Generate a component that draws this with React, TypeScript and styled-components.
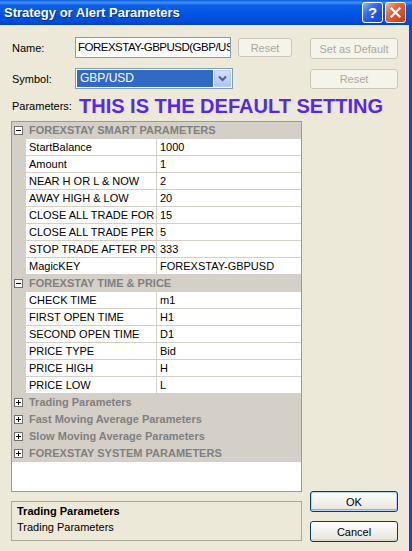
import styled, { createGlobalStyle } from 'styled-components'

const GlobalStyle = createGlobalStyle`
  html, body {
    margin: 0;
    padding: 0;
    background: #ece9d8;
  }
  body {
    font-family: "Liberation Sans", Arial, sans-serif;
    font-size: 11px;
    color: #000;
  }
`

type Param = { name: string; value: string }
type Group = { title: string; open: boolean; rows: Param[] }

const groups: Group[] = [
  {
    title: 'FOREXSTAY SMART PARAMETERS',
    open: true,
    rows: [
      { name: 'StartBalance', value: '1000' },
      { name: 'Amount', value: '1' },
      { name: 'NEAR H OR L & NOW', value: '2' },
      { name: 'AWAY HIGH & LOW', value: '20' },
      { name: 'CLOSE ALL TRADE FOR X PIPS', value: '15' },
      { name: 'CLOSE ALL TRADE PER PERIOD', value: '5' },
      { name: 'STOP TRADE AFTER PROFIT', value: '333' },
      { name: 'MagicKEY', value: 'FOREXSTAY-GBPUSD' },
    ],
  },
  {
    title: 'FOREXSTAY TIME & PRICE',
    open: true,
    rows: [
      { name: 'CHECK TIME', value: 'm1' },
      { name: 'FIRST OPEN TIME', value: 'H1' },
      { name: 'SECOND OPEN TIME', value: 'D1' },
      { name: 'PRICE TYPE', value: 'Bid' },
      { name: 'PRICE HIGH', value: 'H' },
      { name: 'PRICE LOW', value: 'L' },
    ],
  },
  { title: 'Trading Parameters', open: false, rows: [] },
  { title: 'Fast Moving Average Parameters', open: false, rows: [] },
  { title: 'Slow Moving Average Parameters', open: false, rows: [] },
  { title: 'FOREXSTAY SYSTEM PARAMETERS', open: false, rows: [] },
]

const Window = styled.div`
  width: 412px;
  height: 551px;
  display: flex;
  flex-direction: column;
  overflow: hidden;
`

const TitleBar = styled.div`
  height: 25px;
  flex-shrink: 0;
  display: flex;
  align-items: center;
  padding: 0 6px 0 4px;
  background: linear-gradient(
    to bottom,
    #0a5ad8 0%,
    #3d8ff7 10%,
    #0a5ee8 22%,
    #0055e5 55%,
    #004ed8 85%,
    #0041b8 100%
  );
`

const Title = styled.div`
  flex: 1;
  color: #fff;
  font-weight: bold;
  font-size: 13px;
  text-shadow: 1px 1px 0 #0c2f8a;
  white-space: nowrap;
`

const CaptionButtons = styled.div`
  display: flex;
  gap: 2px;
`

const CaptionButton = styled.div<{ $kind: 'help' | 'close' }>`
  width: 19px;
  height: 19px;
  border: 1px solid #fff;
  border-radius: 3px;
  display: flex;
  align-items: center;
  justify-content: center;
  color: #fff;
  font-weight: bold;
  font-size: 15px;
  background: ${(p) =>
    p.$kind === 'help'
      ? 'linear-gradient(135deg, #8fb4ff 0%, #3b6ff0 35%, #1f4fe0 70%, #1a44cc 100%)'
      : 'linear-gradient(135deg, #f4b59c 0%, #e56a3e 35%, #d94a20 70%, #c23a14 100%)'};
`

const Body = styled.div`
  flex: 1;
  display: grid;
  grid-template-columns: 291px 88px;
  column-gap: 8px;
  padding: 12px 0 9px 11px;
  border-right: 3px solid #0846d8;
  background: #ece9d8;
`

const LeftColumn = styled.div`
  display: flex;
  flex-direction: column;
`

const RightColumn = styled.div`
  display: flex;
  flex-direction: column;
`

const FieldRow = styled.div<{ $top: number }>`
  display: flex;
  align-items: center;
  height: 21px;
  margin-top: ${(p) => p.$top}px;
`

const Label = styled.div<{ $width: number }>`
  width: ${(p) => p.$width}px;
  padding-left: 1px;
  box-sizing: border-box;
  flex-shrink: 0;
`

const TextInput = styled.div`
  width: 156px;
  height: 21px;
  box-sizing: border-box;
  border: 1px solid #7f9db9;
  background: #fff;
  font-size: 11.5px;
  letter-spacing: -0.5px;
  line-height: 19px;
  padding-left: 2px;
  white-space: nowrap;
  overflow: hidden;
`

const Select = styled.div`
  width: 158px;
  height: 21px;
  box-sizing: border-box;
  border: 1px solid #7f9db9;
  background: #fff;
  padding: 1px;
  display: flex;
  gap: 1px;
`

const SelectValue = styled.div`
  flex: 1;
  background: #316ac5;
  color: #fff;
  font-size: 12px;
  line-height: 17px;
  padding-left: 3px;
`

const SelectArrow = styled.div`
  width: 17px;
  box-sizing: border-box;
  border: 1px solid #b9cbf3;
  border-radius: 1px;
  background: linear-gradient(to bottom, #d2e0fd 0%, #bed0fa 60%, #b0c5f5 100%);
  display: flex;
  align-items: center;
  justify-content: center;
`

const Button = styled.div<{ $disabled?: boolean; $default?: boolean; $width?: number; $height?: number; $top?: number }>`
  width: ${(p) => (p.$width ? `${p.$width}px` : '100%')};
  height: ${(p) => p.$height ?? 21}px;
  margin-top: ${(p) => p.$top ?? 0}px;
  margin-left: ${(p) => (p.$width ? '7px' : '0')};
  box-sizing: border-box;
  border-radius: 3px;
  display: flex;
  align-items: center;
  justify-content: center;
  font-size: 11px;
  flex-shrink: 0;
  border: 1px solid ${(p) => (p.$disabled ? '#c9c7ba' : '#003c74')};
  color: ${(p) => (p.$disabled ? '#aca899' : '#000')};
  background: ${(p) =>
    p.$disabled
      ? '#f5f4ea'
      : 'linear-gradient(to bottom, #ffffff 0%, #f4f3ee 40%, #ebe9e1 85%, #d6d0c5 100%)'};
  box-shadow: ${(p) =>
    p.$default ? 'inset 0 0 0 1px #bcd4f6, inset 0 -1px 0 1px #89adf0' : 'none'};
`

const BigNote = styled.div`
  color: #5528ee;
  font-weight: bold;
  font-size: 20px;
  line-height: 18px;
  white-space: nowrap;
  margin-left: 3px;
`

const PropertyGrid = styled.div`
  margin-top: 5px;
  height: 371px;
  box-sizing: border-box;
  border: 1px solid #9a9a9a;
  background: #fff;
  overflow: hidden;
`

const GridRow = styled.div<{ $category?: boolean }>`
  display: grid;
  grid-template-columns: 14px 131px 1fr;
  height: 17px;
  background: ${(p) => (p.$category ? '#d4d0c8' : '#fff')};
`

const Gutter = styled.div`
  background: #d4d0c8;
  display: flex;
  align-items: center;
  padding-left: 2px;
`

const Cell = styled.div<{ $divider?: boolean }>`
  box-sizing: border-box;
  border-bottom: 1px solid #d4d0c8;
  border-right: ${(p) => (p.$divider ? '1px solid #d4d0c8' : 'none')};
  padding-left: 3px;
  line-height: 16px;
  white-space: nowrap;
  overflow: hidden;
  text-overflow: clip;
`

const CategoryTitle = styled.div`
  grid-column: 2 / 4;
  padding-left: 3px;
  line-height: 17px;
  font-weight: bold;
  color: #808080;
  white-space: nowrap;
  overflow: hidden;
`

const Description = styled.div`
  margin-top: 9px;
  height: 40px;
  box-sizing: border-box;
  border: 1px solid #aca899;
  padding: 1px 5px;
  line-height: 16px;
`

const DescriptionTitle = styled.div`
  font-weight: bold;
`

const Actions = styled.div`
  margin-top: auto;
  display: flex;
  flex-direction: column;
  gap: 9px;
`

const Toggle = ({ open }: { open: boolean }) => (
  <svg width="9" height="9" viewBox="0 0 9 9">
    <rect x="0.5" y="0.5" width="8" height="8" fill="#fff" stroke="#6e6e6e" />
    <line x1="2" y1="4.5" x2="7" y2="4.5" stroke="#000" />
    {!open && <line x1="4.5" y1="2" x2="4.5" y2="7" stroke="#000" />}
  </svg>
)

const Chevron = () => (
  <svg width="9" height="7" viewBox="0 0 9 7">
    <path d="M1 1.5 L4.5 5 L8 1.5" fill="none" stroke="#4d6185" strokeWidth="2" />
  </svg>
)

const CloseGlyph = () => (
  <svg width="11" height="11" viewBox="0 0 11 11">
    <path d="M1.5 1.5 L9.5 9.5 M9.5 1.5 L1.5 9.5" stroke="#fff" strokeWidth="2.2" strokeLinecap="square" />
  </svg>
)

export default function App() {
  return (
    <>
      <GlobalStyle />
      <Window>
        <TitleBar>
          <Title>Strategy or Alert Parameters</Title>
          <CaptionButtons>
            <CaptionButton $kind="help">?</CaptionButton>
            <CaptionButton $kind="close">
              <CloseGlyph />
            </CaptionButton>
          </CaptionButtons>
        </TitleBar>
        <Body>
          <LeftColumn>
            <FieldRow $top={0}>
              <Label $width={64}>Name:</Label>
              <TextInput>FOREXSTAY-GBPUSD(GBP/USD)</TextInput>
              <Button $disabled $width={54} $height={19}>
                Reset
              </Button>
            </FieldRow>
            <FieldRow $top={10}>
              <Label $width={64}>Symbol:</Label>
              <Select>
                <SelectValue>GBP/USD</SelectValue>
                <SelectArrow>
                  <Chevron />
                </SelectArrow>
              </Select>
            </FieldRow>
            <FieldRow $top={6}>
              <Label $width={65}>Parameters:</Label>
              <BigNote>THIS IS THE DEFAULT SETTING</BigNote>
            </FieldRow>
            <PropertyGrid>
              {groups.map((g) => (
                <div key={g.title}>
                  <GridRow $category>
                    <Gutter>
                      <Toggle open={g.open} />
                    </Gutter>
                    <CategoryTitle>{g.title}</CategoryTitle>
                  </GridRow>
                  {g.rows.map((r) => (
                    <GridRow key={r.name}>
                      <Gutter />
                      <Cell $divider>{r.name}</Cell>
                      <Cell>{r.value}</Cell>
                    </GridRow>
                  ))}
                </div>
              ))}
            </PropertyGrid>
            <Description>
              <DescriptionTitle>Trading Parameters</DescriptionTitle>
              <div>Trading Parameters</div>
            </Description>
          </LeftColumn>
          <RightColumn>
            <Button $disabled $top={1}>
              Set as Default
            </Button>
            <Button $disabled $top={10} $height={20}>
              Reset
            </Button>
            <Actions>
              <Button $default>OK</Button>
              <Button>Cancel</Button>
            </Actions>
          </RightColumn>
        </Body>
      </Window>
    </>
  )
}
